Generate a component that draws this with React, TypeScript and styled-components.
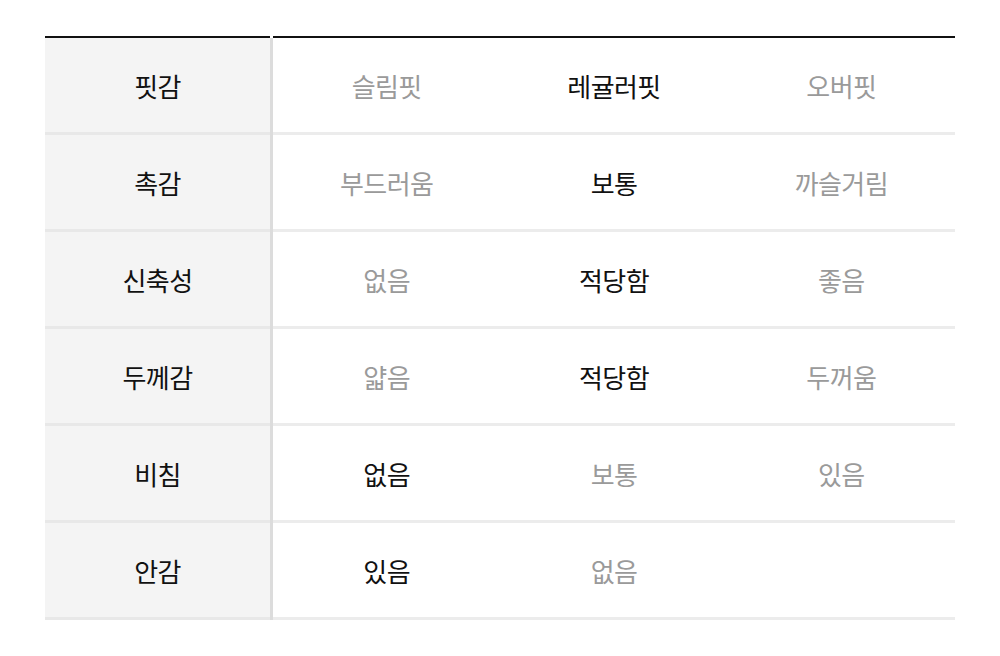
import React from 'react'
import styled, { createGlobalStyle } from 'styled-components'

const GlobalStyle = createGlobalStyle`
  html, body {
    margin: 0;
    padding: 0;
    background: #fff;
  }
  body {
    font-family: "Noto Sans CJK KR", "Noto Sans", sans-serif;
  }
`

const Page = styled.div`
  padding: 36px 45px 0;
`

const Table = styled.div`
  display: flex;
  flex-direction: column;
`

const Row = styled.div<{ $first?: boolean }>`
  display: grid;
  grid-template-columns: 225px 3px 1fr 1fr 1fr;
  height: ${(p) => (p.$first ? '99px' : '97px')};
`

const HeadCell = styled.div<{ $first?: boolean }>`
  display: flex;
  align-items: center;
  justify-content: center;
  background: #f4f4f4;
  border-top: ${(p) => (p.$first ? '2px solid #111' : 'none')};
  border-bottom: 3px solid #e8e8e8;
  font-size: 26px;
  color: #111;
  letter-spacing: -0.6px;
`

const Divider = styled.div<{ $first?: boolean }>`
  background: #dcdcdc;
  border-top: ${(p) => (p.$first ? '2px solid #fff' : 'none')};
`

const Cell = styled.div<{ $first?: boolean; $active?: boolean }>`
  display: flex;
  align-items: center;
  justify-content: center;
  border-top: ${(p) => (p.$first ? '2px solid #111' : 'none')};
  border-bottom: 3px solid #ececec;
  font-size: 26px;
  letter-spacing: -0.6px;
  color: ${(p) => (p.$active ? '#111' : '#9a9a9a')};
`

type Item = { label: string; options: string[]; active: number }

const rows: Item[] = [
  { label: '핏감', options: ['슬림핏', '레귤러핏', '오버핏'], active: 1 },
  { label: '촉감', options: ['부드러움', '보통', '까슬거림'], active: 1 },
  { label: '신축성', options: ['없음', '적당함', '좋음'], active: 1 },
  { label: '두께감', options: ['얇음', '적당함', '두꺼움'], active: 1 },
  { label: '비침', options: ['없음', '보통', '있음'], active: 0 },
  { label: '안감', options: ['있음', '없음', ''], active: 0 },
]

const App: React.FC = () => {
  return (
    <>
      <GlobalStyle />
      <Page>
        <Table>
          {rows.map((row, i) => (
            <Row key={row.label} $first={i === 0}>
              <HeadCell $first={i === 0}>{row.label}</HeadCell>
              <Divider $first={i === 0} />
              {row.options.map((opt, j) => (
                <Cell key={j} $first={i === 0} $active={j === row.active}>
                  {opt}
                </Cell>
              ))}
            </Row>
          ))}
        </Table>
      </Page>
    </>
  )
}

export default App
